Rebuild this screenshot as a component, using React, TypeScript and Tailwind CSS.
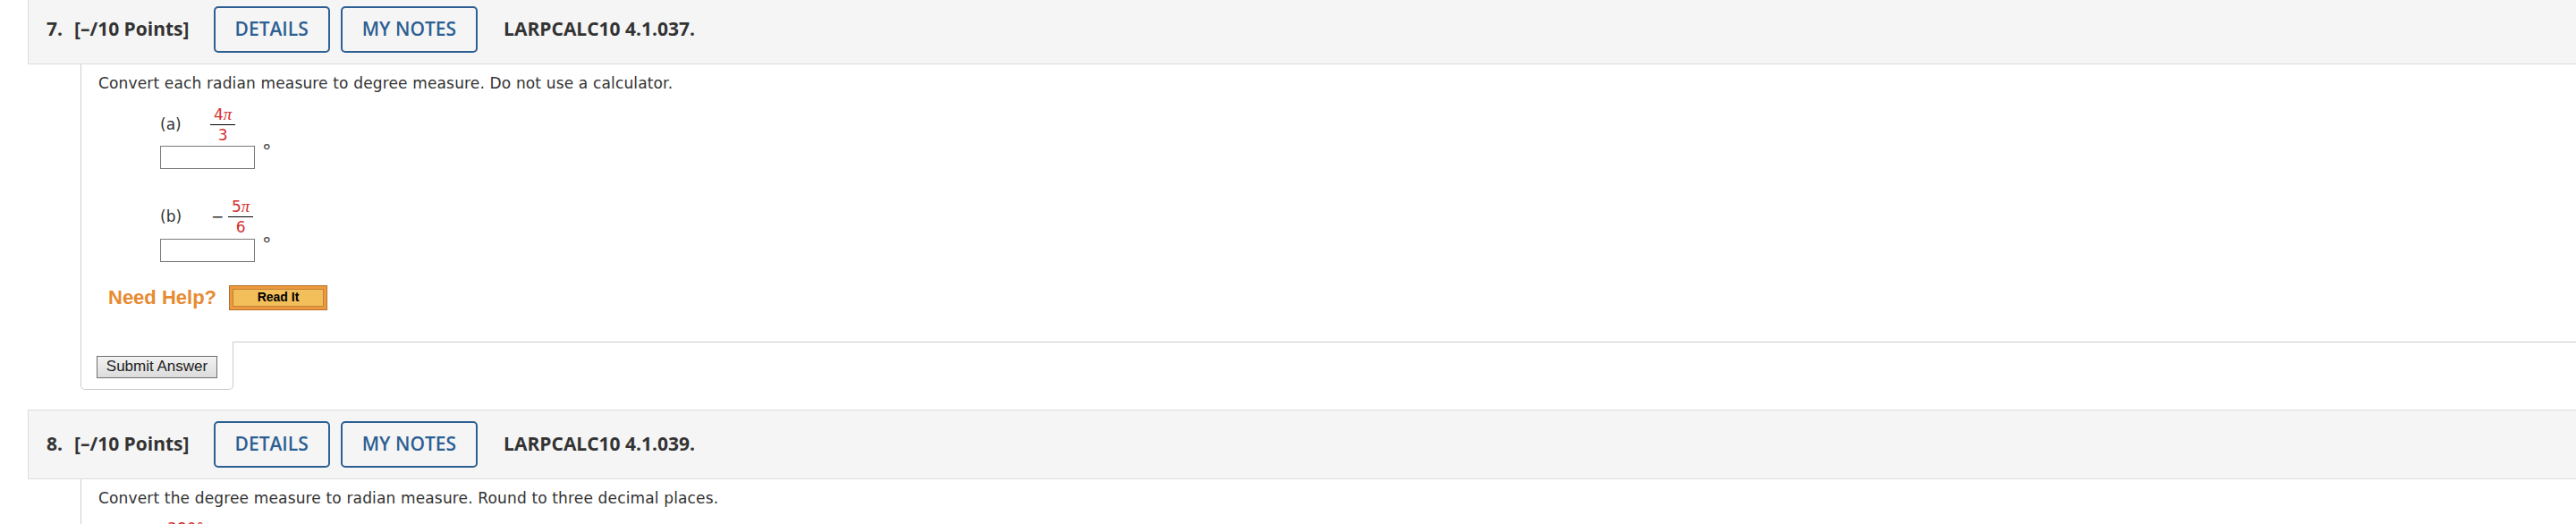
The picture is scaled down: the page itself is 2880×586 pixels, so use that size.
import React from "react";

const Frac = ({ num, den }: { num: React.ReactNode; den: string }) => (
  <span className="inline-flex flex-col items-center text-[#d32f2f] text-[17px] leading-[20px]" style={{ fontFamily: '"DejaVu Sans", Verdana, sans-serif' }}>
    <span className="px-[4px]">{num}</span>
    <span className="self-stretch border-t border-black mt-[1px]" />
    <span className="px-[4px] mt-[1px]">{den}</span>
  </span>
);

const Pi = () => (
  <span className="italic text-[19px]" style={{ fontFamily: '"Liberation Serif", "Times New Roman", serif' }}>
    π
  </span>
);

const Header = ({ n, code }: { n: string; code: string }) => (
  <div
    className="h-[78px] bg-[#f5f5f5] border border-r-0 border-[#dddddd] flex items-center pl-[20px] text-[#333] text-[21px]"
    style={{ fontFamily: '"Open Sans", sans-serif' }}
  >
    <span className="font-bold">{n}</span>
    <span className="font-bold ml-[13px]">[–/10 Points]</span>
    <button className="ml-[27px] h-[52px] px-[22px] border-2 border-[#2d5f93] rounded-[5px] text-[#2d5f93] font-semibold bg-transparent">
      DETAILS
    </button>
    <button className="ml-[12px] h-[52px] px-[22px] border-2 border-[#2d5f93] rounded-[5px] text-[#2d5f93] font-semibold bg-transparent">
      MY NOTES
    </button>
    <span className="font-bold ml-[29px]">{code}</span>
  </div>
);

const AnswerBox = () => (
  <div className="flex items-start">
    <div className="w-[106px] h-[26px] border border-[#7a7a7a] bg-white" />
    <span className="ml-[8px] -mt-[5px] text-[21px] leading-[24px] text-[#444]" style={{ fontFamily: '"DejaVu Sans", Verdana, sans-serif' }}>
      °
    </span>
  </div>
);

export default function App() {
  const body = '"DejaVu Sans", Verdana, sans-serif';
  return (
    <div className="w-[2880px] h-[586px] bg-white overflow-hidden">
      <div className="-mt-[6px] ml-[31px]">
        <Header n="7." code="LARPCALC10 4.1.037." />
        <div className="ml-[59px]">
          <div className="border-l border-[#cccccc] h-[310px] pl-[19px]" style={{ fontFamily: body }}>
            <div className="pt-[10px] text-[17px] tracking-[0.15px] leading-[22px] text-[#333]">
              Convert each radian measure to degree measure. Do not use a calculator.
            </div>
            <div className="ml-[69px] mt-[14px]">
              <div className="flex items-center text-[17px] text-[#333]">
                <span className="w-[56px]">(a)</span>
                <Frac num={<>4<Pi /></>} den="3" />
              </div>
              <div className="mt-[2px]">
                <AnswerBox />
              </div>
              <div className="flex items-center text-[17px] text-[#333] mt-[32px]">
                <span className="w-[57px]">(b)</span>
                <span className="w-[19px]">−</span>
                <Frac num={<>5<Pi /></>} den="6" />
              </div>
              <div className="mt-[3px]">
                <AnswerBox />
              </div>
            </div>
            <div className="flex items-center mt-[23px] ml-[11px]">
              <span className="text-[22px] font-bold text-[#e78a31]" style={{ fontFamily: '"Liberation Sans", Arial, sans-serif' }}>
                Need Help?
              </span>
              <button className="ml-[14px] w-[110px] h-[28px] bg-[#ee9a3c] border border-[#b2702c] p-[3px]">
                <span
                  className="flex items-center justify-center w-full h-full bg-[#f3bf5a] border border-[#c0803a] text-[14px] font-bold text-black"
                  style={{ fontFamily: '"Liberation Sans", Arial, sans-serif' }}
                >
                  Read It
                </span>
              </button>
            </div>
          </div>
          <div className="flex">
            <div className="w-[171px] h-[54px] border-l border-r border-b border-[#cccccc] rounded-b-[5px] pl-[17px] pt-[15px]">
              <button
                className="h-[25px] w-[135px] border border-[#6e6e6e] bg-gradient-to-b from-[#f2f2f2] to-[#dcdcdc] text-[17px] leading-[22px] text-[#222]"
                style={{ fontFamily: '"Liberation Sans", Arial, sans-serif' }}
              >
                Submit Answer
              </button>
            </div>
            <div className="flex-1 border-t border-[#cccccc]" />
          </div>
        </div>
        <div className="mt-[22px]">
          <Header n="8." code="LARPCALC10 4.1.039." />
          <div className="ml-[59px] border-l border-[#cccccc] h-[60px] pl-[19px]" style={{ fontFamily: body }}>
            <div className="pt-[10px] text-[17px] tracking-[0.15px] leading-[22px] text-[#333]">
              Convert the degree measure to radian measure. Round to three decimal places.
            </div>
            <div className="ml-[77px] mt-[13px] text-[17px] leading-[20px] text-[#d32f2f]">380°</div>
          </div>
        </div>
      </div>
    </div>
  );
}
